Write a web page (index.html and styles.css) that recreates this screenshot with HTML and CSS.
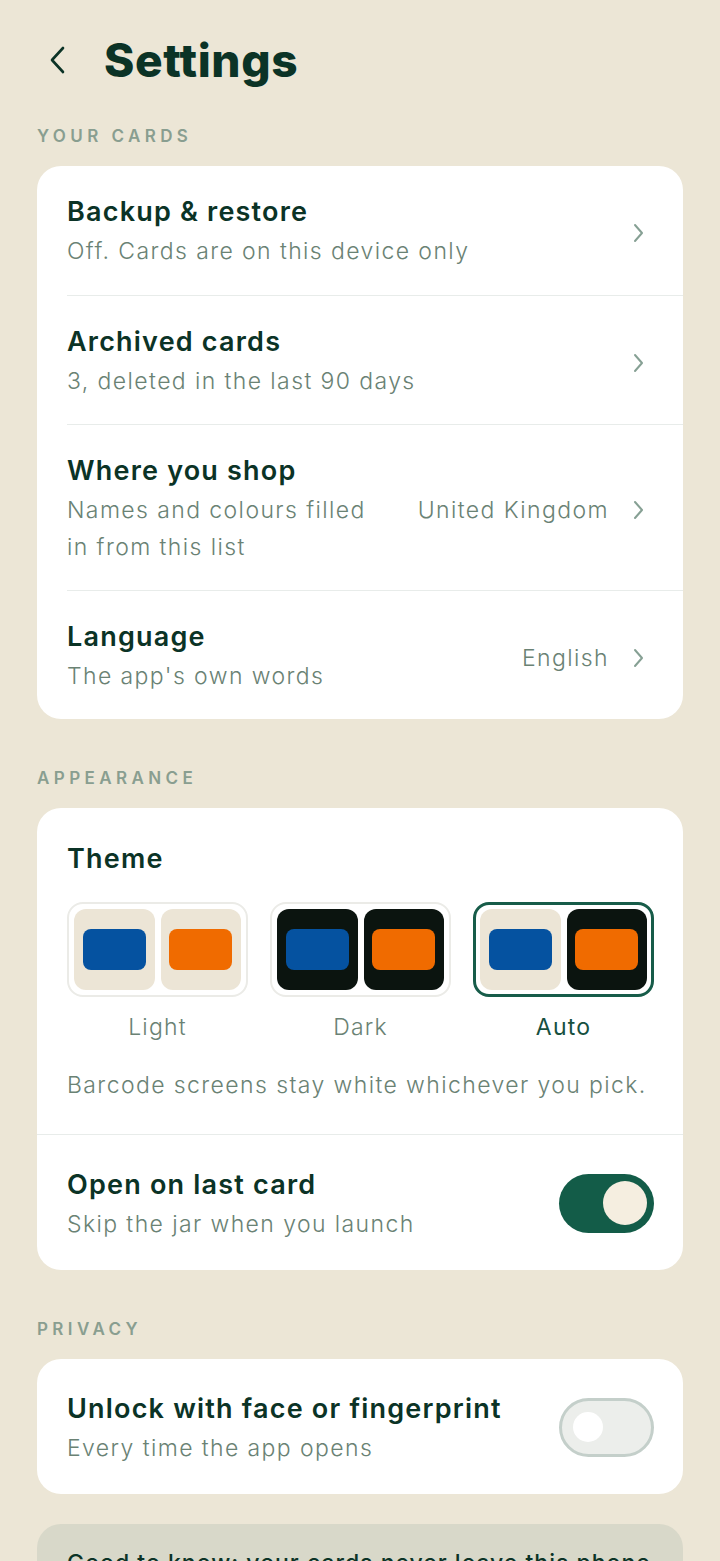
FILE: index.html
```html
<!DOCTYPE html>
<html>
<head lang="en">
    <meta charset="UTF-8">
    <title>Settings</title>
    <link rel="stylesheet" href="styles.css">
</head>
<body>
<div id="page">
    <div class="top-bar">
        <span class="back">
            <svg width="24" height="28" viewBox="0 0 24 28"><path d="M18 2 L7 14 L18 26" fill="none" stroke="#0b3326" stroke-width="2.6" stroke-linecap="round" stroke-linejoin="round"/></svg>
        </span>
        <h1>Settings</h1>
    </div>

    <h2 class="section-label">Your cards</h2>
    <div class="card">
        <div class="row">
            <div class="row-text">
                <div class="row-title">Backup &amp; restore</div>
                <div class="row-sub">Off. Cards are on this device only</div>
            </div>
            <span class="chevron"><svg width="16" height="20" viewBox="0 0 16 20"><path d="M4 2 L11 10 L4 18" fill="none" stroke="#86a094" stroke-width="2" stroke-linecap="round" stroke-linejoin="round"/></svg></span>
        </div>
        <div class="row">
            <div class="row-text">
                <div class="row-title">Archived cards</div>
                <div class="row-sub">3, deleted in the last 90 days</div>
            </div>
            <span class="chevron"><svg width="16" height="20" viewBox="0 0 16 20"><path d="M4 2 L11 10 L4 18" fill="none" stroke="#86a094" stroke-width="2" stroke-linecap="round" stroke-linejoin="round"/></svg></span>
        </div>
        <div class="row">
            <div class="row-text">
                <div class="row-title">Where you shop</div>
                <div class="row-sub">Names and colours filled<br>in from this list</div>
            </div>
            <span class="row-value">United Kingdom</span>
            <span class="chevron"><svg width="16" height="20" viewBox="0 0 16 20"><path d="M4 2 L11 10 L4 18" fill="none" stroke="#86a094" stroke-width="2" stroke-linecap="round" stroke-linejoin="round"/></svg></span>
        </div>
        <div class="row">
            <div class="row-text">
                <div class="row-title">Language</div>
                <div class="row-sub">The app's own words</div>
            </div>
            <span class="row-value">English</span>
            <span class="chevron"><svg width="16" height="20" viewBox="0 0 16 20"><path d="M4 2 L11 10 L4 18" fill="none" stroke="#86a094" stroke-width="2" stroke-linecap="round" stroke-linejoin="round"/></svg></span>
        </div>
    </div>

    <h2 class="section-label">Appearance</h2>
    <div class="card">
        <div class="theme-block">
            <div class="row-title">Theme</div>
            <div class="themes">
                <div class="theme">
                    <div class="swatch">
                        <div class="panel light"><span class="chip blue"></span></div>
                        <div class="panel light"><span class="chip orange"></span></div>
                    </div>
                    <div class="theme-name">Light</div>
                </div>
                <div class="theme">
                    <div class="swatch">
                        <div class="panel dark"><span class="chip blue"></span></div>
                        <div class="panel dark"><span class="chip orange"></span></div>
                    </div>
                    <div class="theme-name">Dark</div>
                </div>
                <div class="theme selected">
                    <div class="swatch">
                        <div class="panel light"><span class="chip blue"></span></div>
                        <div class="panel dark"><span class="chip orange"></span></div>
                    </div>
                    <div class="theme-name">Auto</div>
                </div>
            </div>
            <div class="row-sub note">Barcode screens stay white whichever you pick.</div>
        </div>
        <div class="row toggle-row full-line">
            <div class="row-text">
                <div class="row-title">Open on last card</div>
                <div class="row-sub">Skip the jar when you launch</div>
            </div>
            <span class="switch on"><span class="knob"></span></span>
        </div>
    </div>

    <h2 class="section-label">Privacy</h2>
    <div class="card">
        <div class="row toggle-row">
            <div class="row-text">
                <div class="row-title">Unlock with face or fingerprint</div>
                <div class="row-sub">Every time the app opens</div>
            </div>
            <span class="switch"><span class="knob"></span></span>
        </div>
    </div>

    <div class="info-card">
        Good to know: your cards never leave this phone unless you turn on backup.
    </div>
</div>
</body>
</html>
```

FILE: styles.css
```css
*{
    margin: 0;
    padding: 0;
    box-sizing: border-box;
}
body{
    background: #ece6d6;
    font-family: Inter, "Noto Sans", sans-serif;
    color: #0b3326;
}
#page{
    padding: 32px 37px 40px;
    height: 1561px;
    overflow: hidden;
}
.top-bar{
    display: flex;
    align-items: center;
    height: 56px;
}
.back{
    display: flex;
    width: 67px;
    padding-left: 8px;
}
.top-bar h1{
    font-size: 46px;
    font-weight: 800;
    letter-spacing: 0.6px;
    line-height: 56px;
    color: #0b3326;
}
.section-label{
    margin: 36px 0 18px;
    font-size: 17px;
    line-height: 24px;
    font-weight: 600;
    letter-spacing: 4.4px;
    text-transform: uppercase;
    color: #899e90;
}
.card + .section-label{
    margin-top: 47px;
}
.card{
    background: #fff;
    border-radius: 24px;
    overflow: hidden;
}
.row{
    display: flex;
    align-items: center;
    margin-left: 30px;
    padding: 29px 29px 24px 0;
    border-top: 1px solid #e8ecea;
}
.row:first-child{
    border-top: none;
    padding-bottom: 25px;
}
.row.full-line{
    margin-left: 0;
    padding-left: 30px;
}
.row-text{
    flex: 1;
}
.row-title{
    font-size: 27px;
    line-height: 34px;
    font-weight: 600;
    letter-spacing: 1.2px;
    color: #0b3326;
    margin-bottom: 4px;
}
.row-sub{
    font-size: 23px;
    line-height: 37px;
    font-weight: 300;
    color: #6a8274;
    letter-spacing: 1.4px;
}
.row-value{
    font-size: 23px;
    font-weight: 300;
    color: #6a8274;
    letter-spacing: 1.4px;
    margin-left: 30px;
}
.chevron{
    display: flex;
    width: 16px;
    margin-left: 22px;
    margin-right: 7px;
}
.theme-block{
    padding: 34px 29px 30px 30px;
}
.theme-block .row-title{
    margin-bottom: 0;
}
.themes{
    display: grid;
    grid-template-columns: repeat(3, 1fr);
    gap: 22px;
    margin-top: 26px;
}
.swatch{
    display: flex;
    gap: 6px;
    height: 95px;
    padding: 5px;
    border: 2px solid #ebebe7;
    border-radius: 16px;
}
.theme.selected .swatch{
    border: 3px solid #175c49;
    padding: 4px;
}
.panel{
    flex: 1;
    display: flex;
    align-items: center;
    justify-content: center;
    border-radius: 12px;
}
.panel.light{
    background: #ece5d6;
}
.panel.dark{
    background: #0b140f;
}
.chip{
    width: 63px;
    height: 41px;
    border-radius: 8px;
}
.chip.blue{
    background: #0552a0;
}
.chip.orange{
    background: #f06b00;
}
.theme-name{
    margin-top: 15px;
    text-align: center;
    font-size: 23px;
    line-height: 30px;
    font-weight: 300;
    letter-spacing: 1.2px;
    color: #6a8274;
}
.theme.selected .theme-name{
    color: #17503f;
    font-weight: 400;
}
.note{
    margin-top: 25px;
}
.toggle-row{
    padding-top: 28px;
    padding-bottom: 27px;
}
.row.toggle-row:first-child{
    padding-bottom: 27px;
}
.toggle-row .row-text{
    padding-top: 5px;
}
.switch{
    display: flex;
    align-items: center;
    width: 95px;
    height: 59px;
    border-radius: 30px;
    background: #eceeeb;
    border: 3px solid #c4cfca;
    padding-left: 11px;
}
.switch .knob{
    width: 30px;
    height: 30px;
    border-radius: 50%;
    background: #fff;
}
.switch.on{
    background: #135c48;
    border: none;
    justify-content: flex-end;
    padding-right: 7px;
}
.switch.on .knob{
    width: 44px;
    height: 44px;
    background: #f5eee0;
}
.info-card{
    margin-top: 30px;
    background: #d8d8c9;
    border-radius: 24px;
    padding: 22px 30px;
    font-size: 23px;
    line-height: 34px;
    font-weight: 500;
    letter-spacing: 1px;
    color: #0b3326;
}
```
